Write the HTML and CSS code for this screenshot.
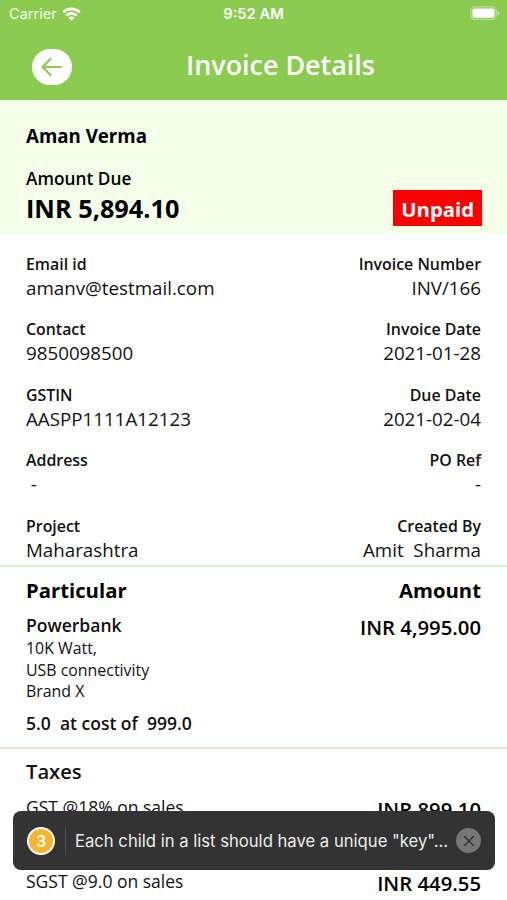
FILE: index.html
```html
<!DOCTYPE html>
<html>
  <head>
    <meta charset="utf-8">
    <title>Invoice Details</title>
    <link rel="stylesheet" href="styles.css">
  </head>
  <body>
    <header>
      <div class="status">
        <div class="carrier">Carrier
          <svg width="19" height="14" viewBox="0 0 19 14" fill="none" stroke="#fff" stroke-width="2.7">
            <path d="M1.2 5.2a11.8 11.8 0 0 1 16.6 0M4.3 8.6a7.4 7.4 0 0 1 10.4 0"/>
            <path d="M9.5 13.8L6.5 10.8a4.2 4.2 0 0 1 6 0z" fill="#fff" stroke="none"/>
          </svg>
        </div>
        <div class="time">9:52 AM</div>
        <div class="battery">
          <svg width="30" height="15" viewBox="0 0 30 15">
            <rect x="0.8" y="0.8" width="25.4" height="12.6" rx="3.8" fill="none" stroke="#fff" stroke-opacity=".4" stroke-width="1.2"/>
            <rect x="2.4" y="2.4" width="22.2" height="9.4" rx="2.2" fill="#fff"/>
            <path d="M27.6 5v4.4q1.7-.8 1.7-2.2t-1.7-2.2z" fill="#fff" fill-opacity=".45"/>
          </svg>
        </div>
      </div>
      <div class="navbar">
        <a class="back" href="#">
          <svg width="22" height="20" viewBox="0 0 22 20" fill="none" stroke="#8bcb50" stroke-width="2.2" stroke-linecap="round" stroke-linejoin="round">
            <path d="M20 10H1.5M9.5 2l-8 8l8 8"/>
          </svg>
        </a>
        <h1>Invoice Details</h1>
      </div>
    </header>

    <section class="summary">
      <div>
        <div class="customer">Aman Verma</div>
        <div class="due-label">Amount Due</div>
        <div class="due">INR 5,894.10</div>
      </div>
      <span class="badge">Unpaid</span>
    </section>

    <section class="details">
      <div class="row">
        <div><label>Email id</label><p>amanv@testmail.com</p></div>
        <div><label>Invoice Number</label><p>INV/166</p></div>
      </div>
      <div class="row">
        <div><label>Contact</label><p>9850098500</p></div>
        <div><label>Invoice Date</label><p>2021-01-28</p></div>
      </div>
      <div class="row">
        <div><label>GSTIN</label><p>AASPP1111A12123</p></div>
        <div><label>Due Date</label><p>2021-02-04</p></div>
      </div>
      <div class="row">
        <div><label>Address</label><p> -</p></div>
        <div><label>PO Ref</label><p>-</p></div>
      </div>
      <div class="row">
        <div><label>Project</label><p>Maharashtra</p></div>
        <div><label>Created By</label><p>Amit  Sharma</p></div>
      </div>
    </section>

    <section class="items">
      <div class="line heading"><span>Particular</span><span>Amount</span></div>
      <div class="line">
        <div>
          <div class="item-name">Powerbank</div>
          <div class="item-desc">10K Watt,<br>USB connectivity<br>Brand X</div>
          <div class="item-cost">5.0  at cost of  999.0</div>
        </div>
        <div class="price">INR 4,995.00</div>
      </div>
    </section>

    <section class="taxes">
      <h2>Taxes</h2>
      <div class="line tax"><span>GST @18% on sales</span><span class="price">INR 899.10</span></div>
      <div class="line tax"></div>
      <div class="line tax"><span>SGST @9.0 on sales</span><span class="price">INR 449.55</span></div>
    </section>

    <div class="toast">
      <span class="count">3</span>
      <span class="message">Each child in a list should have a unique "key"...</span>
      <span class="close">
        <svg width="12" height="12" viewBox="0 0 12 12" stroke="#333" stroke-width="1.5" stroke-linecap="round">
          <path d="M1.5 1.5l9 9M10.5 1.5l-9 9"/>
        </svg>
      </span>
    </div>
  </body>
</html>
```

FILE: styles.css
```css
* {
	box-sizing: border-box;
}
body {
	margin: 0;
	height: 900px;
	overflow: hidden;
	background: #fff;
	color: #111;
	font-family: "Open Sans", "Noto Sans", sans-serif;
}
h1, h2, p {
	margin: 0;
}
header {
	height: 100px;
	background: #8bcb50;
	color: #fff;
}
.status {
	display: grid;
	grid-template-columns: 1fr auto 1fr;
	height: 27px;
	padding: 0 7px 0 9px;
	align-items: center;
	font-family: Inter, "Liberation Sans", sans-serif;
	font-size: 14.6px;
}
.carrier {
	display: flex;
	align-items: center;
	gap: 5px;
	color: #f2fbe9;
}
.time {
	font-weight: 600;
	font-size: 14.7px;
	margin-right: 2px;
}
.battery {
	display: flex;
	justify-content: flex-end;
}
.navbar {
	display: flex;
	align-items: center;
	height: 76px;
	padding-left: 32px;
	margin-top: 2px;
}
.back {
	display: flex;
	align-items: center;
	justify-content: center;
	width: 40px;
	height: 36px;
	border-radius: 18px;
	background: #fff;
}
.navbar h1 {
	margin: -4px 0 0 114px;
	font-size: 26.9px;
	font-weight: 600;
	line-height: 36px;
}
.summary {
	display: flex;
	justify-content: space-between;
	align-items: flex-end;
	height: 134px;
	padding: 0 25px 8px 26px;
	background: #f3ffe8;
	color: #000;
}
.customer {
	font-size: 18.7px;
	font-weight: 700;
	line-height: 26px;
	margin-bottom: 17px;
}
.due-label {
	font-size: 17.3px;
	font-weight: 600;
	line-height: 25px;
}
.due {
	font-size: 25.3px;
	font-weight: 700;
	line-height: 35px;
}
.badge {
	height: 36px;
	padding: 0 8px;
	background: #f00;
	color: #fff;
	font-size: 20.3px;
	font-weight: 700;
	line-height: 38px;
}
.details {
	height: 333px;
	padding: 18px 26px 0 26px;
	border-bottom: 2px solid #dcf0cb;
}
.row {
	display: flex;
	justify-content: space-between;
	height: 65.4px;
}
.row > div:last-child {
	text-align: right;
}
.row label {
	display: block;
	font-size: 15.9px;
	font-weight: 600;
	line-height: 24px;
}
.row p {
	font-size: 18.75px;
	line-height: 23px;
	white-space: pre;
}
.items {
	height: 182px;
	padding: 9px 26px 0 26px;
	border-bottom: 2px solid #dcf0cb;
}
.line {
	display: flex;
	justify-content: space-between;
}
.heading {
	color: #000;
	font-size: 20.3px;
	font-weight: 700;
	line-height: 28px;
	margin-bottom: 8px;
}
.item-name {
	font-size: 17.5px;
	font-weight: 600;
	line-height: 26px;
}
.item-desc {
	font-size: 15.9px;
	line-height: 21.6px;
}
.item-cost {
	margin-top: 8px;
	font-size: 17.5px;
	font-weight: 600;
	line-height: 24px;
	white-space: pre;
}
.price {
	color: #000;
	font-size: 20.3px;
	font-weight: 600;
	line-height: 31px;
}
.taxes {
	padding: 8px 26px 0 26px;
}
.taxes h2 {
	font-size: 20.2px;
	font-weight: 600;
	line-height: 28px;
	margin-bottom: 10px;
}
.tax {
	height: 37px;
	font-size: 17.5px;
	line-height: 24px;
}
.tax .price {
	line-height: 28px;
}
/* warning bar floats over the tax rows */
.toast {
	position: fixed;
	left: 13px;
	right: 12px;
	top: 811px;
	display: flex;
	align-items: center;
	height: 59px;
	padding: 0 14px;
	border-radius: 8px;
	background: #333;
	color: #eee;
	font-family: Inter, "Liberation Sans", sans-serif;
}
.count {
	width: 28px;
	height: 28px;
	border: 2px solid #fff;
	border-radius: 50%;
	background: #f8b430;
	color: #fff;
	font-size: 16px;
	font-weight: 600;
	line-height: 24px;
	text-align: center;
}
.message {
	flex: 1;
	margin-left: 10px;
	padding-left: 9px;
	border-left: 1px solid #4c4c4c;
	font-size: 16.65px;
	line-height: 28px;
	white-space: nowrap;
}
.close {
	display: flex;
	align-items: center;
	justify-content: center;
	width: 25px;
	height: 25px;
	border-radius: 50%;
	background: #777;
}
```
